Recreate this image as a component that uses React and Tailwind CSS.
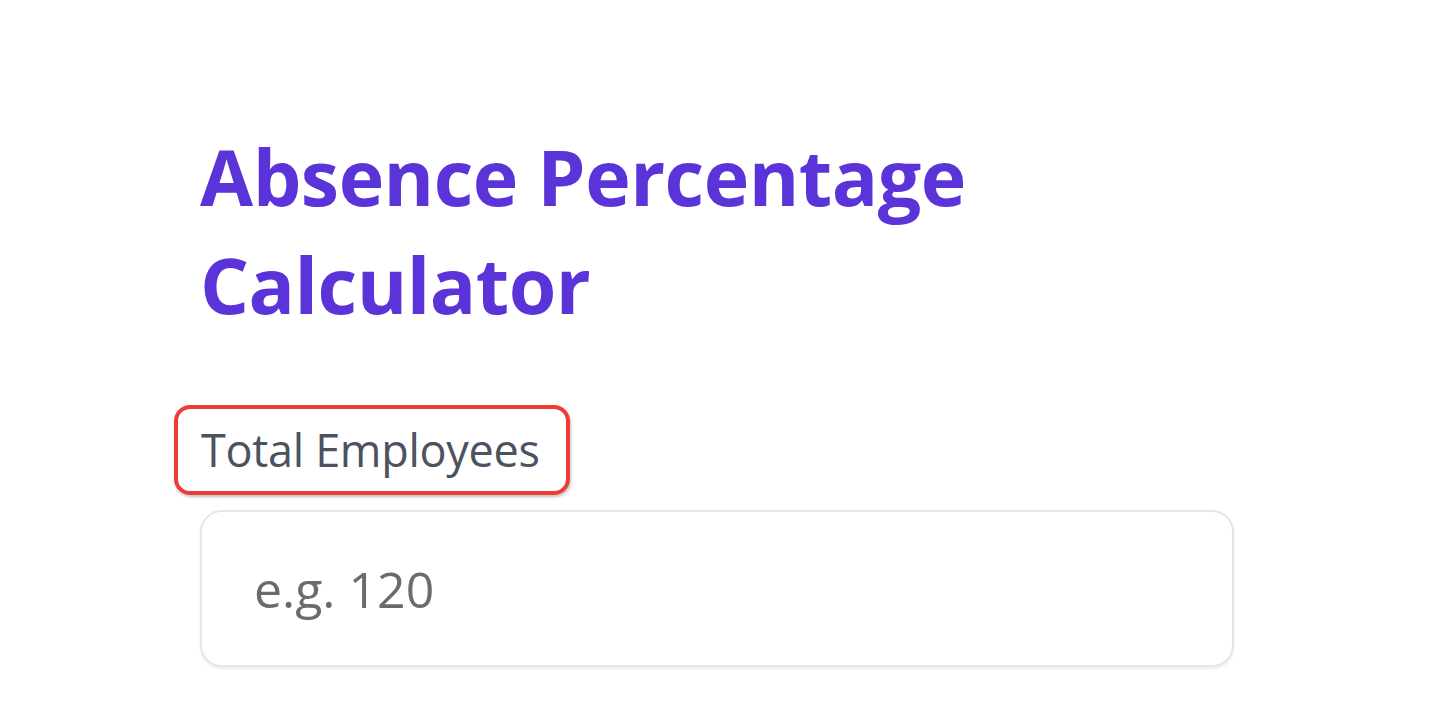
import React from "react";

const App = () => {
  return (
    <div className="min-h-screen w-full bg-white font-['Open_Sans',sans-serif]">
      <div className="pl-[200px] pr-[216px] pt-[123px]">
        {/* Heading */}
        <h1 className="text-[77px] font-bold leading-[108px] tracking-[-0.5px] text-[#5b34d9] w-[800px]">
          Absence Percentage Calculator
        </h1>

        {/* Field */}
        <div className="mt-[66px]">
          <label
            htmlFor="employees"
            className="-ml-[26px] inline-block rounded-[16px] border-4 border-[#ef3b36] pl-[23px] pr-[26px] py-[13px] text-[45px] leading-[56px] font-medium tracking-[-0.3px] text-[#4b5260] shadow-[1px_2px_3px_rgba(0,0,0,0.25)]"
          >
            Total Employees
          </label>
          <input
            id="employees"
            type="text"
            placeholder="e.g. 120"
            className="mt-[15px] block h-[157px] w-[1034px] rounded-[22px] border-2 border-[#e6e6e6] bg-white px-[52px] text-[50px] text-[#555] placeholder-[#6b6b6b] shadow-[0_2px_3px_rgba(0,0,0,0.08)] outline-none"
          />
        </div>
      </div>
    </div>
  );
};

export default App;
